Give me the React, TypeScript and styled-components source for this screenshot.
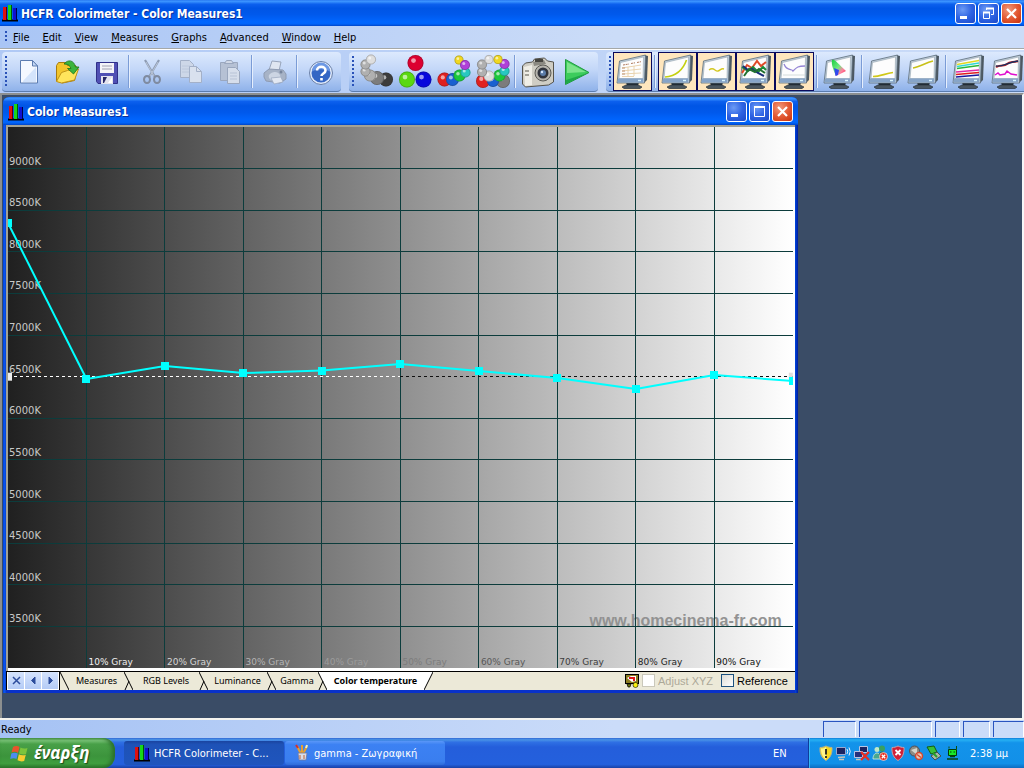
import React from "react";
import styled, { createGlobalStyle, css } from "styled-components";

const uiFont = '"DejaVu Sans Condensed", "DejaVu Sans", sans-serif';
const titleFont = '"Noto Sans", "Open Sans", sans-serif';
const plainFont = '"Liberation Sans", Arial, sans-serif';

const GlobalStyle = createGlobalStyle`
  *, *::before, *::after { box-sizing: border-box; }
  body { margin: 0; font-family: ${uiFont}; font-size: 11px; color: #000; }
  button { font: inherit; color: inherit; margin: 0; padding: 0; border: 0; background: none; }
  svg { display: block; }
`;

const Screen = styled.div`
  display: flex;
  flex-direction: column;
  min-height: 100vh;
  overflow: hidden;
  background: #cbdcf9;
`;

const titleGradient = "linear-gradient(#2a7bf2 0, #3a93ff 6%, #0c60ee 16%, #0055e5 32%, #0059ec 56%, #0066ff 84%, #0064fa 92%, #0045c8 100%)";

const AppTitleBar = styled.header`
  display: flex;
  align-items: center;
  height: 26px;
  padding: 0 2px;
  background: ${titleGradient};
`;

const TitleText = styled.h1`
  flex: 1;
  margin: 0 0 0 3px;
  padding-top: 1px;
  font: bold 12px/18px ${uiFont};
  color: #fff;
  text-shadow: 1px 1px 0 #0a2f9a;
  white-space: nowrap;
`;

const WindowButtons = styled.div`
  display: flex;
  gap: 2px;
`;

const WindowButton = styled.button<{ $close?: boolean }>`
  display: grid;
  place-items: center;
  width: 21px;
  height: 21px;
  border: 1px solid #fff;
  border-radius: 3px;
  background: ${(p) =>
    p.$close
      ? "radial-gradient(circle at 35% 30%, #f0997c 0, #e35a34 50%, #c8310c 100%)"
      : "radial-gradient(circle at 35% 30%, #6c9bf5 0, #2e63e3 50%, #1a48c8 100%)"};
`;

const MenuBar = styled.nav`
  display: flex;
  align-items: center;
  height: 23px;
  padding-left: 5px;
  background: linear-gradient(90deg, #a9c5f5, #cbdcf8 60%);
  border-bottom: 1px solid #a5a8a8;
`;

const Grip = styled.span<{ $dots: number }>`
  flex: none;
  width: 2px;
  height: ${(p) => p.$dots * 4}px;
  background: repeating-linear-gradient(#2a52b8 0 2px, transparent 2px 4px);
`;

const MenuItem = styled.button`
  height: 22px;
  padding: 2px 6px 0;
  margin-right: 1px;
  line-height: 20px;
  &::first-letter { text-decoration: underline; }
`;

const ToolBar = styled.div`
  display: flex;
  height: 44px;
  padding: 2px 0 1px 2px;
  gap: 8px;
  overflow: hidden;
  background: linear-gradient(90deg, #b0c9f5, #cbdcf8);
  border-top: 1px solid #fff;
`;

const ToolBand = styled.div<{ $grow?: boolean }>`
  display: flex;
  align-items: center;
  flex: ${(p) => (p.$grow ? "1 0 auto" : "none")};
  padding: 0 2px 0 3px;
  border-radius: 4px;
  border-bottom: 1px solid #5a7cae;
  background: linear-gradient(#dce9fd, #c3d7f8 45%, #8fb2ea);
`;

const ToolButton = styled.button<{ $checked?: boolean }>`
  flex: none;
  display: grid;
  place-items: center;
  width: 39px;
  height: 39px;
  ${(p) =>
    p.$checked &&
    css`
      background: #ffe6bd;
      box-shadow: inset 0 0 0 1px #0a0a5c;
    `}
`;

const Buttons = styled.div`
  display: flex;
  margin-left: 2px;
`;

const ToolSeparator = styled.span`
  flex: none;
  width: 2px;
  height: 33px;
  margin: 3px 2px;
  border-left: 1px solid #7b9cd6;
  border-right: 1px solid #e6effd;
`;

const Workspace = styled.main`
  display: flex;
  flex: 1;
  min-height: 600px;
  padding: 2px 0 25px 1px;
  background: #3a4c66;
  border: 2px solid #8c8f8f;
  border-right-color: #f4f6f8;
  border-bottom: 0;
`;

const ChildWindow = styled.section`
  display: flex;
  flex-direction: column;
  width: 78%;
  padding: 0 3px 3px;
  border-radius: 6px 6px 0 0;
  background: linear-gradient(90deg, #0040dc, #0a5cf0 2px, #0831c9 3px, #0831c9 calc(100% - 3px), #0048e0 calc(100% - 3px), #001c9c);
`;

const ChildTitleBar = styled.header`
  display: flex;
  align-items: center;
  height: 28px;
  margin: 0 -3px;
  padding: 1px 5px 0;
  border-radius: 6px 6px 0 0;
  background: ${titleGradient};
`;

const ChartFrame = styled.div`
  display: flex;
  flex: 1;
  padding: 2px 2px 3px;
  background: linear-gradient(90deg, #a3a295 2px, transparent 2px), linear-gradient(#a3a295 2px, #fff 2px);
`;

const ChartArea = styled.div`
  flex: 1;
  background: linear-gradient(90deg, #202020, #ffffff);
  svg { width: 100%; height: 100%; }
`;

const SheetBar = styled.div`
  display: flex;
  height: 19px;
  border-top: 1px solid #000;
  background: #ece9d8;
`;

const SheetNav = styled.div`
  display: flex;
  gap: 1px;
  padding: 0 1px 1px;
  border-left: 1px solid #000;
  border-right: 1px solid #000;
  background: #fff;
`;

const SheetNavButton = styled.button`
  display: grid;
  place-items: center;
  width: 16px;
  background: linear-gradient(#d5e3fd, #b4cbf6);
`;

const Tab = styled.button<{ $w: number; $active?: boolean }>`
  width: ${(p) => p.$w}px;
  padding-bottom: 2px;
  text-align: center;
  font: ${(p) => (p.$active ? "bold" : "normal")} 9px/15px ${titleFont};
  white-space: nowrap;
  background: ${(p) => (p.$active ? "#fff" : "transparent")};
`;

const Options = styled.div`
  display: flex;
  align-items: center;
  gap: 8px;
  margin-left: auto;
  padding: 0 7px 1px 0;
`;

const Option = styled.label<{ $off?: boolean }>`
  display: flex;
  align-items: center;
  gap: 3px;
  font: 11px/14px ${plainFont};
  color: ${(p) => (p.$off ? "#aca899" : "#000")};
`;

const OptionGroup = styled.div`
  display: flex;
  align-items: center;
  gap: 3px;
`;

const CheckBox = styled.input`
  appearance: none;
  width: 13px;
  height: 13px;
  margin: 0;
  border: 1px solid #1c5180;
  background: linear-gradient(135deg, #dcdcd7, #fff);
  &:disabled { border-color: #cac8bb; background: #fff; }
`;

const StatusBar = styled.footer`
  display: flex;
  align-items: stretch;
  gap: 3px;
  height: 20px;
  border-top: 2px solid #f4f3ee;
  background: linear-gradient(90deg, #a5c2f4, #cbdcf9 60%);
`;

const StatusText = styled.span`
  flex: 1;
  padding-left: 1px;
  line-height: 20px;
`;

const StatusPane = styled.span<{ $w: number }>`
  width: ${(p) => p.$w}px;
  margin: 1px 0;
  border: 1px solid #fff;
  border-top-color: #2a55c0;
  border-left-color: #2a55c0;
  border-bottom: 0;
`;

const TaskBar = styled.div`
  display: flex;
  height: 30px;
  color: #fff;
  background: linear-gradient(#3168d5 0, #4993e6 6%, #2f70e4 14%, #245edb 30%, #2460dd 88%, #1941a5 100%);
`;

const StartButton = styled.button`
  display: flex;
  align-items: center;
  gap: 4px;
  width: 115px;
  padding-left: 10px;
  border-radius: 0 12px 12px 0;
  font: italic bold 17px/24px ${titleFont};
  color: #fff;
  text-shadow: 1px 1px 1px #1a4a1a;
  background: linear-gradient(#5aa85a 0, #7cc67a 8%, #48a048 20%, #3c943c 60%, #3f9e3f 85%, #2b7a2b 100%);
  box-shadow: inset -3px 0 4px #2a6e2a;
`;

const Tasks = styled.div`
  display: flex;
  flex: 1;
  gap: 1px;
  padding: 3px 0 3px 9px;
`;

const TaskButton = styled.button<{ $pressed?: boolean }>`
  display: flex;
  align-items: center;
  gap: 4px;
  width: 160px;
  padding-left: ${(p) => (p.$pressed ? 10 : 9)}px;
  border-radius: 3px;
  white-space: nowrap;
  background: ${(p) => (p.$pressed ? "linear-gradient(#1a44a0, #1e52b7 15%, #1f55bd)" : "linear-gradient(#5a97f8, #3c81f3 15%, #3a7eef 85%, #2f6cd8)")};
`;

const Language = styled.span`
  width: 35px;
  line-height: 31px;
`;

const Tray = styled.div`
  display: flex;
  align-items: center;
  gap: 2px;
  padding: 0 16px 0 9px;
  border-left: 1px solid #0f3c9c;
  background: linear-gradient(#0f7ad8 0, #27b1f3 6%, #1393ea 16%, #1290e8 85%, #0e6cc0 100%);
  box-shadow: inset 1px 0 0 #35b8f5;
`;

const Clock = styled.time`
  margin-left: 8px;
`;

/* ---------- small drawings ---------- */

const BarsLogo = () => (
  <svg width="16" height="18" viewBox="0 0 16 18" aria-hidden="true">
    <path d="M0 16.5h16" stroke="#000" strokeWidth="2" />
    <rect x="1" y="3" width="4" height="13" fill="#e01010" />
    <rect x="4" y="3" width="1" height="13" fill="#5c0000" />
    <rect x="6" y="1" width="4" height="15" fill="#18d818" />
    <rect x="9" y="1" width="1" height="15" fill="#005c00" />
    <rect x="11" y="4" width="4" height="12" fill="#1010d0" />
    <rect x="14" y="4" width="1" height="12" fill="#000048" />
  </svg>
);

const MinimizeGlyph = () => (
  <svg width="15" height="15" aria-hidden="true"><rect x="2" y="10" width="7" height="3" fill="#fff" /></svg>
);
const MaximizeGlyph = () => (
  <svg width="15" height="15" fill="none" stroke="#fff" aria-hidden="true">
    <path d="M2.5 3.5h10v9h-10z" /><path d="M2 3h11" strokeWidth="2" />
  </svg>
);
const RestoreGlyph = () => (
  <svg width="15" height="15" fill="none" stroke="#fff" aria-hidden="true">
    <path d="M2.5 6.5h6v6h-6z" /><path d="M2 6.5h7" strokeWidth="2" />
    <path d="M5.500 4V2.500h7v6H10" /><path d="M5 2.500h8" strokeWidth="2" />
  </svg>
);
const CloseGlyph = () => (
  <svg width="15" height="15" aria-hidden="true">
    <path d="M3 3l9 9M12 3l-9 9" stroke="#fff" strokeWidth="2.200" />
  </svg>
);

const Icon = ({ children }: { children: React.ReactNode }) => (
  <svg width="36" height="36" viewBox="0 0 36 36" aria-hidden="true">{children}</svg>
);

const NewIcon = () => (
  <Icon>
    <path d="M9.500 6.500h12l5 5.500v17h-17z" fill="#f4f8ff" stroke="#5c7cb0" />
    <path d="M12 27L25 13v15H12z" fill="#d4e4fb" />
    <path d="M21.500 6.500v5.500h5z" fill="#c4d8f6" stroke="#5c7cb0" />
  </Icon>
);
const OpenIcon = () => (
  <Icon>
    <path d="M6.500 27V11.500l2-3h7l2 3h8l2 3-3 12-12 2.500z" fill="#f2c52c" stroke="#a87c10" />
    <path d="M6.500 27.500l5-9 6-2 11-1.500-4 11-13 3z" fill="#ffe45c" stroke="#c09418" />
    <path d="M14 10c4-5 10-4 11.500 3H29l-5.500 7-6-5.500h3.500c-1-3-3-4.500-7-4.500z" fill="#3cb43c" stroke="#187418" strokeWidth=".8" />
  </Icon>
);
const SaveIcon = () => (
  <Icon>
    <path d="M7.500 8.500h21v21H9l-1.500-2z" fill="#5050b4" stroke="#303088" />
    <rect x="11" y="9" width="14" height="10" fill="#f4f4f8" />
    <path d="M13 12h10M13 15h10" stroke="#a0a0b0" />
    <rect x="12" y="22" width="12" height="8" fill="#e4e4ee" />
    <path d="M14 23h4l-3 6h-1z" fill="#282868" /><path d="M19 29l4-6v6z" fill="#fff" />
  </Icon>
);
const CutIcon = () => (
  <Icon>
    <path d="M11 6l10 17M25 6L15 23" stroke="#8d9bb2" strokeWidth="2.200" />
    <path d="M12 8l8 14M24 8l-8 14" stroke="#c4cede" strokeWidth=".8" />
    <ellipse cx="13" cy="25.500" rx="3" ry="3.500" fill="none" stroke="#7f8ba0" strokeWidth="2" />
    <ellipse cx="23" cy="25.500" rx="3" ry="3.500" fill="none" stroke="#7f8ba0" strokeWidth="2" />
  </Icon>
);
const CopyIcon = () => (
  <Icon>
    <path d="M7.500 6.500h9l4 4v13h-13z" fill="#cdd7e8" stroke="#a3b0c8" />
    <path d="M9 12h8M9 15h8M9 18h8" stroke="#bcc8dc" />
    <path d="M16.500 12.500h7l5 5v11h-12z" fill="#d9e1ee" stroke="#a3b0c8" />
    <path d="M23.500 12.500v5h5" fill="none" stroke="#a3b0c8" />
  </Icon>
);
const PasteIcon = () => (
  <Icon>
    <path d="M8.500 8.500h17v18h-17z" fill="#b6c1d4" stroke="#9aa7be" />
    <path d="M12.500 9.500l2-3h5l2 3z" fill="#d0d8e6" stroke="#9aa7be" />
    <path d="M15.500 13.500h8l4 4v12h-12z" fill="#d6deeb" stroke="#9aa7be" />
    <path d="M18 19h7M18 22h7M18 25h7" stroke="#b8c3d6" />
  </Icon>
);
const PrintIcon = () => (
  <Icon>
    <path d="M12 16l3-9 9 1-2 9z" fill="#dfe6f1" stroke="#98a5bb" />
    <path d="M7 19l5-4 14 1 3 4v5l-6 4-14-2-2-4z" fill="#a7b3c6" stroke="#8e9bb2" />
    <path d="M12 21c3-4 9-4 11 0s-2 7-6 6-6-3-5-6z" fill="#ccd5e3" />
    <path d="M14 24l10-1 2 5-9 2z" fill="#e2e8f2" stroke="#98a5bb" strokeWidth=".7" />
    <circle cx="24" cy="18" r="1.500" fill="#76849c" />
  </Icon>
);
const HelpIcon = () => (
  <Icon>
    <circle cx="19" cy="19" r="11.500" fill="#dfe9fa" stroke="#6a80a8" />
    <circle cx="19" cy="19" r="9.500" fill="#3466c4" />
    <path d="M10 17.500a9 9 0 0 1 18 0c-5-3-13-3-18 0z" fill="#6c98e4" />
    <path d="M15 16.500c0-5 8.500-5 8.500 0 0 3-4 3-4 5.500M19.500 24v2.500" fill="none" stroke="#fff" strokeWidth="2.600" />
  </Icon>
);

type BallSpec = [number, number, number, string];
const shades: Record<string, string> = {
  w: "#dedede", l: "#b0b0b0", g: "#7c7c7c", d: "#3c3c3c", r: "#e02020", b: "#1a60d0", n: "#1cc83c", c: "#28c8c0", m: "#b040d8", y: "#f0d820",
  R: "#dc0030", G: "#5ad810", B: "#0808dc",
};
const Balls = ({ list }: { list: BallSpec[] }) => (
  <Icon>
    {list.map(([x, y, r, k], i) => (
      <g key={i}>
        <circle cx={x} cy={y} r={r} fill={shades[k]} />
        <circle cx={x} cy={y} r={r - 0.400} fill="none" stroke="#202020" strokeOpacity=".3" strokeWidth=".8" />
        <circle cx={x - r * 0.250} cy={y - r * 0.300} r={r * 0.300} fill="#fff" fillOpacity=".6" />
      </g>
    ))}
  </Icon>
);
const grayBalls: BallSpec[] = [[28, 25.5, 7, "d"], [19, 24, 7, "g"], [12, 21.5, 6, "l"], [7.5, 17.5, 5, "l"], [7.5, 10.5, 5, "l"], [13, 5.5, 5, "w"]];
const rgbBalls: BallSpec[] = [[18.5, 9, 8, "R"], [10, 25.5, 8, "G"], [26.5, 25.5, 8, "B"]];
const colorBalls: BallSpec[] = [[8.5, 25.5, 7, "r"], [16.5, 25.5, 6.5, "b"], [23.5, 21.5, 6, "n"], [29.5, 18.5, 5, "c"], [23, 6, 4.5, "y"], [29, 11, 5, "m"]];
const ringBalls: BallSpec[] = [[8, 27, 7, "r"], [28, 27, 7, "g"], [18, 27, 6, "b"], [24.5, 21.5, 6, "n"], [14, 22, 5.5, "w"], [29.5, 17, 5, "c"], [7, 18, 5, "l"], [7, 10.5, 5, "l"], [29.5, 10, 5, "m"], [14, 5.5, 4.5, "w"], [23, 5.5, 4.5, "y"]];

const CameraIcon = () => (
  <Icon>
    <path d="M2.500 12l3-3 7-1 2-3 10-1 3 3 6 1v20l-5 3-23 2-3-3z" fill="#cfcdc4" stroke="#55534c" />
    <path d="M4 13l8-2v20l-7 1z" fill="#f0eee6" />
    <path d="M13 8l11-2 2 4-12 2z" fill="#8b8981" />
    <rect x="15" y="5" width="8" height="3" fill="#45443f" />
    <circle cx="23" cy="19" r="8" fill="#b5b3ac" stroke="#5a5954" />
    <circle cx="23" cy="19" r="5.500" fill="#31343c" />
    <circle cx="23" cy="19" r="3" fill="#5b7ca8" />
    <circle cx="22" cy="18" r="1.200" fill="#d8e8ff" />
    <path d="M5 17h4M5 21h4" stroke="#a3a198" strokeWidth="2" />
  </Icon>
);
const PlayIcon = () => (
  <Icon>
    <path d="M6.500 5.500v25L30 18.500z" fill="#3ccc5c" stroke="#229a40" />
    <path d="M8 8v11l19-1z" fill="#7ce48c" />
    <path d="M7 26l22-7-22 11z" fill="#1fa848" />
  </Icon>
);

const Monitor = ({ children }: { children: React.ReactNode }) => (
  <Icon>
    <path d="M11 28h13l-1 4H12z" fill="#202a34" />
    <path d="M7 33l4-2h12l4 2-2 1.500H9z" fill="#4a5660" stroke="#28323a" strokeWidth=".7" />
    <path d="M29 1l4 1-1 24-3 3z" fill="#4c5862" />
    <path d="M4.500 7L30.500 1l-1 28H2z" fill="#c2d0dc" stroke="#5c6c7a" strokeWidth=".8" />
    <path d="M5.500 8.500L28.500 3l-.5 21.500H4z" fill="#fdfdfd" stroke="#8796a2" strokeWidth=".5" />
    <path d="M3 24.500h25.500l-.3 4H2.500z" fill="#86a4c8" />
    <path d="M23 26.500h3" stroke="#d8f4ff" strokeWidth="1.400" />
    {children}
  </Icon>
);

const screens = {
  table: (
    <g fill="none" strokeWidth=".9">
      <path d="M8 11l6-1M16 9.500l4-.7M22 8.500l4-.8" stroke="#a86c4c" strokeDasharray="2 .7" />
      <path d="M7 14l19-3M7 17l19-2M7 20l19-1M7 22.500h12M13 13v9M19 12v10" stroke="#e8cfa8" />
      <path d="M7 14h3M7 17h3M7 20h3" stroke="#b88868" />
    </g>
  ),
  gamma: <path d="M5 23c12-1 18-7 21.500-17" fill="none" stroke="#c4d010" strokeWidth="1.600" />,
  wave: <path d="M10 16c5-4 6 2 9 1s3-3 6-2" fill="none" stroke="#d4c820" strokeWidth="1.400" />,
  rgb: (
    <g fill="none" strokeWidth="2">
      <path d="M4 19l5-8 5 3 5-7 4 5 5-4" stroke="#e04a28" />
      <path d="M4 13l6 4 5-4 5 5 5-5 3 3" stroke="#1b8a38" />
      <path d="M5 12l5 4 4-1 6 4 6 3" stroke="#182c78" />
      <path d="M6 22l5-7 6 3 4-3 6 4" stroke="#207030" />
    </g>
  ),
  temp: <g fill="none"><path d="M6 21h22" stroke="#d4dcdc" /><path d="M7 10c3 8 8 4 9 7 4-4 5-5 12-5" stroke="#9484d4" strokeWidth="1.300" /></g>,
  low: <path d="M6 22.500c7 0 12-3 20-4" fill="none" stroke="#d0c818" strokeWidth="1.700" />,
  high: <path d="M7 14c7-1 12-5 20-7" fill="none" stroke="#c8c018" strokeWidth="1.700" />,
  lines: (
    <g fill="none" strokeWidth="1.300">
      <path d="M6 10.500l22-4" stroke="#e0d820" /><path d="M6 12.500l22-3.500" stroke="#30d8d8" /><path d="M6 14.500l22-3" stroke="#28b838" />
      <path d="M5 18l23-2" stroke="#e028a8" /><path d="M5 20.500l23-2" stroke="#e02020" /><path d="M5 23l23-2" stroke="#1818a0" />
    </g>
  ),
  dual: (
    <g fill="none">
      <path d="M6 13c6-3 8 0 11-3s6-1 11-3" stroke="#d02020" strokeWidth="2" />
      <path d="M6 12c8 1 9-3 22-5" stroke="#183060" strokeWidth="1.300" />
      <path d="M5 21l3-2 2 2 5-1 2-3 4 3 6 1" stroke="#e010d0" strokeWidth="1.500" />
    </g>
  ),
};

const GamutMonitor = () => (
  <Monitor>
    <defs>
      <linearGradient id="gamut" x1="0" y1="0" x2="1" y2="1">
        <stop offset="0" stopColor="#18d040" /><stop offset=".45" stopColor="#70e880" /><stop offset=".7" stopColor="#ff80a0" /><stop offset="1" stopColor="#f01030" />
      </linearGradient>
    </defs>
    <path d="M10 6c3-1 6 4 14 11l-10 5c-2-5-5-11-4-16z" fill="url(#gamut)" />
    <path d="M12 14l5 2-1 5-2.500 1z" fill="#3048f0" />
  </Monitor>
);

const FlagLogo = () => (
  <svg width="20" height="20" viewBox="0 0 20 20" aria-hidden="true">
    <path d="M3 4c2-1.500 5-1 6.500 0L8 10C6 8.500 4 8.500 1.500 9.500z" fill="#e8542c" />
    <path d="M10.500 4.500c2 1 4 1.500 7 .5L16 11c-2.500 1-4.500.5-7-.5z" fill="#7cc43c" />
    <path d="M1.300 10.500c2-1.200 4.500-1 6.500 0L6.500 16c-2-1.200-4-1-6.300 0z" fill="#4c8cf0" />
    <path d="M8.800 11.300c2 1 4.500 1.500 7 .5L14.200 18c-2.500.8-4.500.3-6.700-.8z" fill="#f8cc30" />
  </svg>
);

const PaintIcon = () => (
  <svg width="16" height="18" viewBox="0 0 16 18" aria-hidden="true">
    <path d="M3 2l4 8M8 1v9M13 2l-4 8" stroke="#e8a030" strokeWidth="2" />
    <path d="M2 1l2 3" stroke="#d03030" strokeWidth="2" /><path d="M13 1l-1 3" stroke="#f0f0c0" strokeWidth="2" />
    <path d="M4 9h9l-1 7H5z" fill="#d8dce8" stroke="#7078a0" strokeWidth=".8" />
    <path d="M6 11v4M10 11v4" stroke="#c06030" />
  </svg>
);

const AdjustIcon = () => (
  <svg width="14" height="14" viewBox="0 0 14 14" aria-hidden="true">
    <rect x=".5" y=".5" width="13" height="9" fill="#8c7c20" stroke="#000" />
    <path d="M2 4l4-2h5v5l-4 1z" fill="#fff" /><path d="M4 4h5v3" fill="none" stroke="#e01818" strokeWidth="2" />
    <path d="M2 10h4l-1 3H3z" fill="#6c7410" stroke="#000" strokeWidth=".7" />
    <circle cx="10.500" cy="11" r="2.500" fill="#f8f010" stroke="#000" strokeWidth=".6" />
  </svg>
);

const TrayIcon = ({ children }: { children: React.ReactNode }) => (
  <svg width="16" height="16" viewBox="0 0 16 16" aria-hidden="true">{children}</svg>
);
const BadgeCross = () => (
  <g><circle cx="11.500" cy="11.500" r="4" fill="#e83020" stroke="#fff" strokeWidth=".6" /><path d="M9.800 9.800l3.400 3.400M13.200 9.800l-3.400 3.400" stroke="#fff" strokeWidth="1.300" /></g>
);

const TrayIcons = () => (
  <>
    <TrayIcon><path d="M8 1c2 1 4 1.500 6 1.500C14.500 9 12 13 8 15.500 4 13 1.500 9 2 2.500 4 2.500 6 2 8 1z" fill="#f8d820" stroke="#b8b090" /><path d="M3 3.500C5 3.500 7 3 8 2v13C5 12 3 9 3 3.500z" fill="#fff48c" /><path d="M8 4v5.500M8 11v2" stroke="#222" strokeWidth="1.800" /></TrayIcon>
    <TrayIcon><path d="M.5 2.500h9v7h-9z" fill="#1c2460" stroke="#98a8d0" /><path d="M2 12.500l7-.5M3 14.500h5" stroke="#c8c4b8" strokeWidth="1.600" /><path d="M11 4q1.500 2 0 5M13 2.500q2.500 4 0 8" fill="none" stroke="#e8f0ff" /></TrayIcon>
    <TrayIcon><path d="M5.500 1.500h8v6h-8z" fill="#1c2460" stroke="#b8c4e4" /><path d="M.5 6.500h8v6h-8z" fill="#28307c" stroke="#b8c4e4" /><path d="M2 14.500h6" stroke="#c8c4b8" strokeWidth="1.500" /><path d="M7 7l8 8M15 7l-8 8" stroke="#e82c20" strokeWidth="2.200" /></TrayIcon>
    <TrayIcon><circle cx="5" cy="4.500" r="2.500" fill="#c0e8c8" /><circle cx="10" cy="3.500" r="3" fill="#38a060" /><path d="M1 14c0-8 8-8 8 0z" fill="#48a890" stroke="#d8f0e0" strokeWidth=".8" /><path d="M7 10c1-5 6-4 7 0z" fill="#306c50" /><BadgeCross /></TrayIcon>
    <TrayIcon><path d="M8 1c2 1 4 1.500 6 1.500C14.500 9 12 13 8 15.500 4 13 1.500 9 2 2.500 4 2.500 6 2 8 1z" fill="#d02038" stroke="#c8a0a8" /><path d="M5.500 5l5 5M10.500 5l-5 5" stroke="#fff" strokeWidth="1.800" /></TrayIcon>
    <TrayIcon><circle cx="6.500" cy="6" r="5" fill="#8c8c84" stroke="#505058" /><path d="M3 5l6-2v7z" fill="#d4d4cc" /><circle cx="11" cy="11" r="3.500" fill="#e8c8b8" stroke="#d04830" strokeWidth="1.500" /><path d="M9 9.500l4 3" stroke="#d04830" strokeWidth="1.300" /></TrayIcon>
    <TrayIcon><path d="M1 2l7-1 3 6-6 2z" fill="#38c038" stroke="#145c14" /><path d="M5 11l6-4 4 4-6 4z" fill="#a8b8a8" stroke="#405050" /><path d="M7 8l4 4" stroke="#28a028" strokeWidth="2" /></TrayIcon>
    <TrayIcon><path d="M5 1.500v2M12.500 1v3" stroke="#0c4c10" /><path d="M4.500 4.500h8v6h-8z" fill="#18e828" stroke="#043c04" /><path d="M6 7h1.500M9.500 7H11" stroke="#043c04" /><path d="M6 11.500h5M3 14h11" stroke="#064408" strokeWidth="1.500" /></TrayIcon>
  </>
);

const TabEdge = ({ front, joined }: { front?: boolean; joined?: boolean }) => (
  <svg width="9" height="18" viewBox="0 0 9 18" fill="none" stroke="#000" aria-hidden="true">
    {front && <path d="M0 0h9v18z" fill="#fff" stroke="none" />}
    <path d="M0 0l9 18" />
    {joined && <path d="M1 18l4-9" />}
  </svg>
);

/* ---------- chart ---------- */

const TOP_K = 9500;
const BOTTOM_K = 3000;
const TARGET_K = 6500;
const readings = [8346, 6472, 6628, 6544, 6574, 6652, 6568, 6484, 6352, 6520, 6448];
const grayInk = ["#f0f0f0", "#d6d6d6", "#b4b4b4", "#9c9c9c", "#7c7c7c", "#585858", "#3c3c3c", "#1e1e1e", "#101010"];
const kelvins = Array.from({ length: 12 }, (_, i) => 9000 - i * 500);
const yOf = (k: number) => `${((TOP_K - k) / (TOP_K - BOTTOM_K)) * 100}%`;

const TemperatureChart = () => (
  <ChartArea>
    <svg role="img" aria-label="Color temperature by gray level">
      <g fontFamily={plainFont} fontWeight="bold" fontSize="16" fill="#929292">
        <svg x="100%" y="100%" overflow="visible"><text x="-11" y="-42" textAnchor="end">www.homecinema-fr.com</text></svg>
      </g>
      <g stroke="#0c3c3c" shapeRendering="crispEdges">
        {kelvins.filter((k) => k !== TARGET_K).map((k) => <line key={k} x1="0" x2="100%" y1={yOf(k)} y2={yOf(k)} />)}
        {grayInk.map((_, i) => <line key={i} x1={`${(i + 1) * 10}%`} x2={`${(i + 1) * 10}%`} y1="0" y2="100%" />)}
      </g>
      <g fontFamily='"DejaVu Sans", sans-serif' fontSize="10" fill="#c8c8c8">
        {kelvins.map((k) => <text key={k} x="1" y={yOf(k)} dy="-4">{k}K</text>)}
      </g>
      <g fontFamily='"DejaVu Sans", sans-serif' fontSize="9">
        {grayInk.map((ink, i) => (
          <svg key={i} x={`${(i + 1) * 10}%`} y="100%" overflow="visible">
            <text x="2" y="-3" fill={ink}>{(i + 1) * 10}% Gray</text>
          </svg>
        ))}
      </g>
      <g shapeRendering="crispEdges" strokeDasharray="3 3">
        <line x1="0" x2="50%" y1={yOf(TARGET_K)} y2={yOf(TARGET_K)} stroke="#fff" />
        <line x1="50%" x2="100%" y1={yOf(TARGET_K)} y2={yOf(TARGET_K)} stroke="#101010" />
      </g>
      <svg x="0" y={yOf(TARGET_K)} overflow="visible"><rect x="0" y="-4" width="4" height="8" fill="#ececec" /></svg>
      <svg x="100%" y={yOf(TARGET_K)} overflow="visible"><rect x="-4" y="-4" width="4" height="8" fill="#dedede" /></svg>
      <g stroke="#0ff" strokeWidth="2">
        {readings.slice(1).map((k, i) => (
          <line key={i} x1={`${i * 10}%`} y1={yOf(readings[i])} x2={`${(i + 1) * 10}%`} y2={yOf(k)} />
        ))}
      </g>
      {readings.map((k, i) => (
        <svg key={i} x={`${i * 10}%`} y={yOf(k)} overflow="visible">
          <rect x="-4" y="-4" width="8" height="8" fill="#0ff" shapeRendering="crispEdges" />
        </svg>
      ))}
    </svg>
  </ChartArea>
);

const menus = ["File", "Edit", "View", "Measures", "Graphs", "Advanced", "Window", "Help"];
const tabs = [
  { name: "Measures", w: 55 },
  { name: "RGB Levels", w: 66 },
  { name: "Luminance", w: 59 },
  { name: "Gamma", w: 42 },
];

const Tool = ({ label, checked, children }: { label: string; checked?: boolean; children: React.ReactNode }) => (
  <ToolButton type="button" aria-label={label} $checked={checked}>{children}</ToolButton>
);

export default function App() {
  return (
    <Screen>
      <GlobalStyle />
      <AppTitleBar>
        <BarsLogo />
        <TitleText>HCFR Colorimeter - Color Measures1</TitleText>
        <WindowButtons>
          <WindowButton type="button" aria-label="Minimize"><MinimizeGlyph /></WindowButton>
          <WindowButton type="button" aria-label="Restore"><RestoreGlyph /></WindowButton>
          <WindowButton type="button" aria-label="Close" $close><CloseGlyph /></WindowButton>
        </WindowButtons>
      </AppTitleBar>

      <MenuBar>
        <Grip $dots={3} />
        {menus.map((m) => <MenuItem key={m} type="button">{m}</MenuItem>)}
      </MenuBar>

      <ToolBar>
        <ToolBand>
          <Grip $dots={8} />
          <Buttons>
            <Tool label="New"><NewIcon /></Tool>
            <Tool label="Open"><OpenIcon /></Tool>
            <Tool label="Save"><SaveIcon /></Tool>
            <ToolSeparator />
            <Tool label="Cut"><CutIcon /></Tool>
            <Tool label="Copy"><CopyIcon /></Tool>
            <Tool label="Paste"><PasteIcon /></Tool>
            <ToolSeparator />
            <Tool label="Print"><PrintIcon /></Tool>
            <ToolSeparator />
            <Tool label="About"><HelpIcon /></Tool>
          </Buttons>
        </ToolBand>
        <ToolBand>
          <Grip $dots={8} />
          <Buttons>
            <Tool label="Measure gray scale"><Balls list={grayBalls} /></Tool>
            <Tool label="Measure primaries"><Balls list={rgbBalls} /></Tool>
            <Tool label="Measure secondaries"><Balls list={colorBalls} /></Tool>
            <Tool label="Measure all"><Balls list={ringBalls} /></Tool>
            <ToolSeparator />
            <Tool label="Configure sensor"><CameraIcon /></Tool>
            <Tool label="Start"><PlayIcon /></Tool>
          </Buttons>
        </ToolBand>
        <ToolBand $grow>
          <Grip $dots={8} />
          <Buttons>
            <Tool label="Measures view" checked><Monitor>{screens.table}</Monitor></Tool>
            <ToolSeparator />
            <Tool label="Luminance view" checked><Monitor>{screens.gamma}</Monitor></Tool>
            <Tool label="Gamma view" checked><Monitor>{screens.wave}</Monitor></Tool>
            <Tool label="RGB view" checked><Monitor>{screens.rgb}</Monitor></Tool>
            <Tool label="Temperature view" checked><Monitor>{screens.temp}</Monitor></Tool>
            <ToolSeparator />
            <Tool label="CIE diagram"><GamutMonitor /></Tool>
            <ToolSeparator />
            <Tool label="Near black"><Monitor>{screens.low}</Monitor></Tool>
            <Tool label="Near white"><Monitor>{screens.high}</Monitor></Tool>
            <ToolSeparator />
            <Tool label="Saturation"><Monitor>{screens.lines}</Monitor></Tool>
            <Tool label="Measures combo"><Monitor>{screens.dual}</Monitor></Tool>
          </Buttons>
        </ToolBand>
      </ToolBar>

      <Workspace>
        <ChildWindow>
          <ChildTitleBar>
            <BarsLogo />
            <TitleText as="h2">Color Measures1</TitleText>
            <WindowButtons>
              <WindowButton type="button" aria-label="Minimize chart"><MinimizeGlyph /></WindowButton>
              <WindowButton type="button" aria-label="Maximize chart"><MaximizeGlyph /></WindowButton>
              <WindowButton type="button" aria-label="Close chart" $close><CloseGlyph /></WindowButton>
            </WindowButtons>
          </ChildTitleBar>
          <ChartFrame><TemperatureChart /></ChartFrame>
          <SheetBar>
            <SheetNav>
              <SheetNavButton type="button" aria-label="Close sheet"><svg width="9" height="9"><path d="M1 1l7 7M8 1L1 8" stroke="#2c4c9c" strokeWidth="1.500" /></svg></SheetNavButton>
              <SheetNavButton type="button" aria-label="Previous sheet"><svg width="9" height="9"><path d="M6 1L2.500 4.500L6 8z" fill="#2c4c9c" stroke="#2c4c9c" /></svg></SheetNavButton>
              <SheetNavButton type="button" aria-label="Next sheet"><svg width="9" height="9"><path d="M3 1l3.500 3.500L3 8z" fill="#2c4c9c" stroke="#2c4c9c" /></svg></SheetNavButton>
            </SheetNav>
            {tabs.map((t, i) => (
              <React.Fragment key={t.name}>
                <TabEdge joined={i > 0} />
                <Tab type="button" $w={t.w}>{t.name}</Tab>
              </React.Fragment>
            ))}
            <TabEdge front joined />
            <Tab type="button" $w={97} $active>Color temperature</Tab>
            <svg width="9" height="18" aria-hidden="true"><path d="M0 0h9L0 18z" fill="#fff" /><path d="M9 0L0 18" stroke="#000" /></svg>
            <Options>
              <OptionGroup>
                <AdjustIcon />
                <Option $off><CheckBox type="checkbox" disabled />Adjust XYZ</Option>
              </OptionGroup>
              <Option><CheckBox type="checkbox" />Reference</Option>
            </Options>
          </SheetBar>
        </ChildWindow>
      </Workspace>

      <StatusBar>
        <StatusText>Ready</StatusText>
        <StatusPane $w={33} />
        <StatusPane $w={73} />
        <StatusPane $w={25} />
        <StatusPane $w={27} />
        <StatusPane $w={31} />
      </StatusBar>

      <TaskBar>
        <StartButton type="button"><FlagLogo />έναρξη</StartButton>
        <Tasks>
          <TaskButton type="button" $pressed><BarsLogo />HCFR Colorimeter - C...</TaskButton>
          <TaskButton type="button"><PaintIcon />gamma - Ζωγραφική</TaskButton>
        </Tasks>
        <Language>EN</Language>
        <Tray>
          <TrayIcons />
          <Clock>2:38 μμ</Clock>
        </Tray>
      </TaskBar>
    </Screen>
  );
}
